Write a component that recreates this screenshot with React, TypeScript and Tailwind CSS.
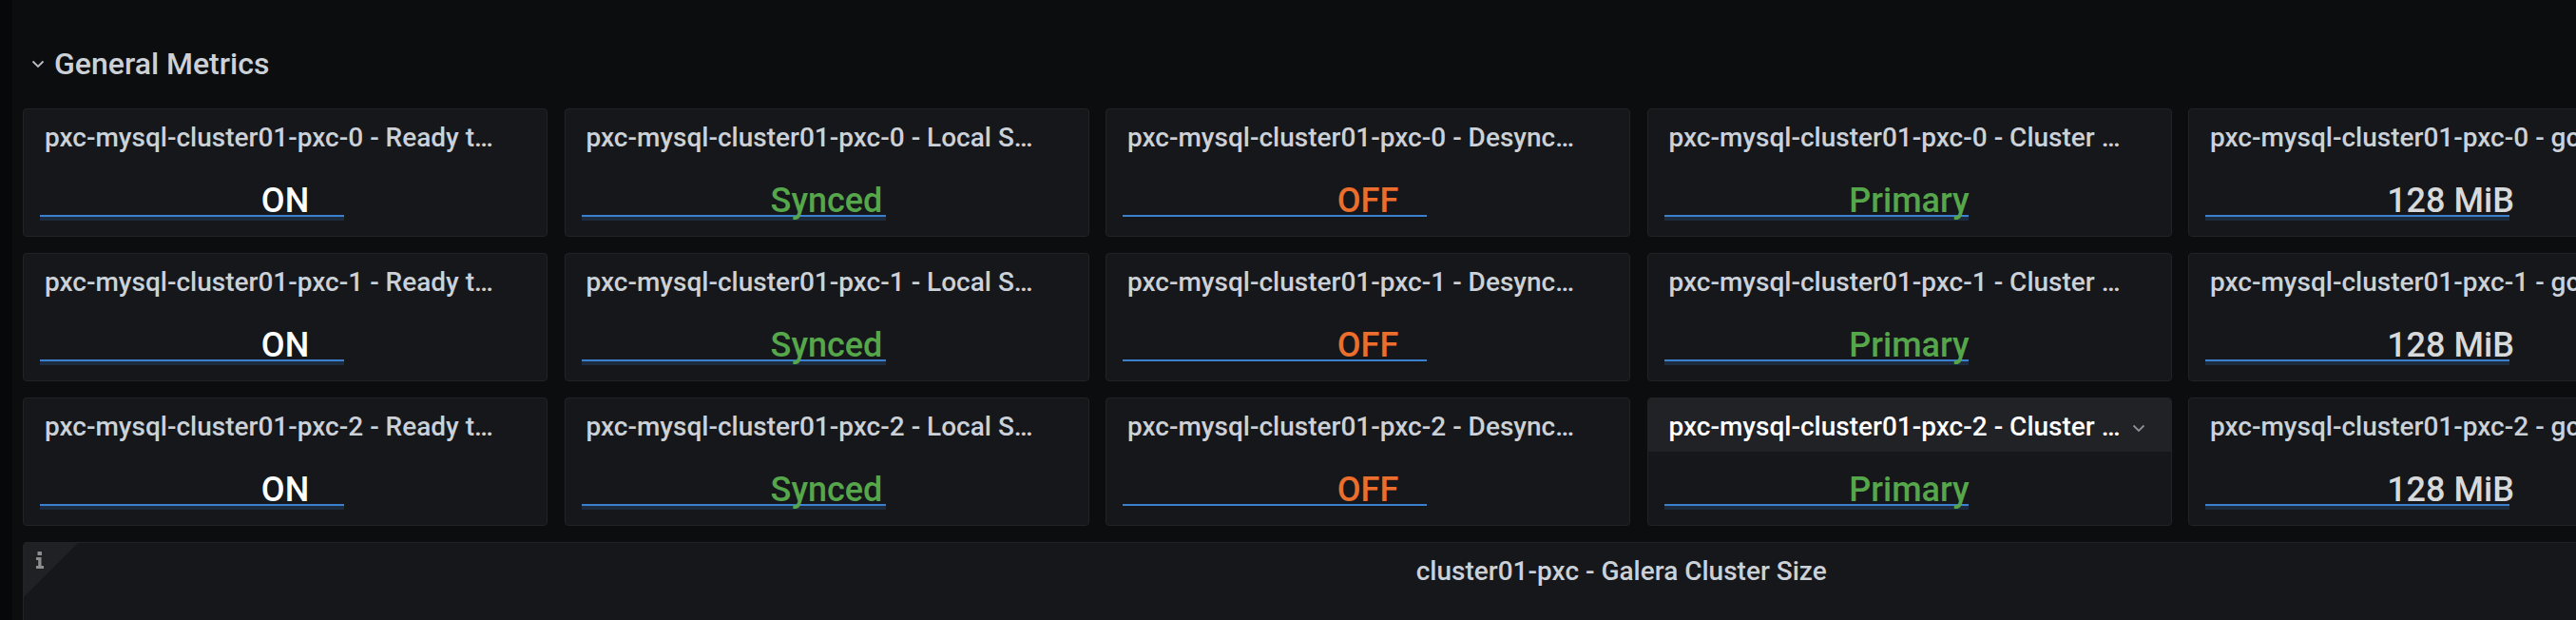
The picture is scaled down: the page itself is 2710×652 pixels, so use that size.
import React from "react";

interface StatProps {
  title: string;
  value: string;
  color: string;
  fill: boolean;
  hover?: boolean;
}

const columns = [
  { label: "Ready t…", value: "ON", color: "text-white", fill: true },
  { label: "Local S…", value: "Synced", color: "text-[#56a64b]", fill: true },
  { label: "Desync…", value: "OFF", color: "text-[#eb6e2d]", fill: false },
  { label: "Cluster …", value: "Primary", color: "text-[#56a64b]", fill: true },
  { label: "gcache Size", value: "128 MiB", color: "text-[#d8d9da]", fill: true },
  { label: "Flow Control Paused", value: "0%", color: "text-[#56a64b]", fill: true },
];

function Chevron({ className }: { className?: string }) {
  return (
    <svg className={className} width="14" height="9" viewBox="0 0 14 9" fill="none">
      <path d="M1.5 1.5l5.5 5.5 5.5-5.5" stroke="currentColor" strokeWidth="1.8" />
    </svg>
  );
}

function StatPanel({ title, value, color, fill, hover }: StatProps) {
  return (
    <div className="relative h-[135px] rounded-[4px] border border-[#222327] bg-[#16171b] overflow-hidden flex flex-col">
      <div
        className={`h-[56px] shrink-0 flex items-start px-[22px] pt-[3px] ${
          hover ? "bg-[#212226] text-white" : "text-[#ccd1d8]"
        }`}
      >
        <span className="text-[28px] leading-[53px] font-medium whitespace-nowrap overflow-hidden">
          {title}
        </span>
        {hover && <Chevron className="ml-auto mr-[5px] mt-[24px] shrink-0 text-[#8e8f96]" />}
      </div>
      <div className="absolute left-[17px] top-[111px] w-[320px]">
        <div className="h-[2px] bg-[#3b7fcf]" />
        {fill && <div className="h-[4px] bg-[#1c2b3d]" />}
      </div>
      <div className={`relative flex-1 pt-[22px] text-center text-[36px] leading-[36px] font-medium ${color}`}>
        {value}
      </div>
    </div>
  );
}

export default function App() {
  return (
    <div className="w-[2710px] h-[652px] overflow-hidden bg-[#0c0d0f] flex font-['Roboto',sans-serif]">
      <div className="w-[13px] shrink-0 bg-[#070809]" />
      <div className="pl-[11px] pt-[47px]">
        <div className="flex items-center h-[40px] text-[#ccd1d8]">
          <Chevron className="ml-[9px] text-[#b9bec6]" />
          <span className="ml-[10px] text-[32px] leading-[40px] font-medium">General Metrics</span>
        </div>
        <div className="mt-[27px] grid grid-cols-[repeat(6,552px)] gap-x-[17.5px] gap-y-[17px]">
          {[0, 1, 2].map((node) =>
            columns.map((c, i) => (
              <StatPanel
                key={`${node}-${i}`}
                title={`pxc-mysql-cluster01-pxc-${node} - ${c.label}`}
                value={c.value}
                color={c.color}
                fill={c.fill}
                hover={node === 2 && i === 3}
              />
            ))
          )}
          <div className="relative col-span-6 h-[300px] rounded-[4px] border border-[#222327] bg-[#16171b] overflow-hidden">
            <div className="absolute top-0 left-0 w-[57px] h-[57px] bg-[#202125] [clip-path:polygon(0_0,100%_0,0_100%)]">
              <svg className="absolute left-[13px] top-[9px] text-[#8e8e8e]" width="8" height="18" viewBox="0 0 8 18" fill="currentColor">
                <rect x="1.5" y="0" width="4.5" height="4" rx="0.6" />
                <path d="M0 6h5.5v9H8v3H0v-3h2.2V9H0z" />
              </svg>
            </div>
            <div className="h-[56px] pt-[3px] pr-[36px] text-center text-[28px] leading-[53px] font-medium text-[#ccd1d8]">
              cluster01-pxc - Galera Cluster Size
            </div>
          </div>
        </div>
      </div>
    </div>
  );
}
